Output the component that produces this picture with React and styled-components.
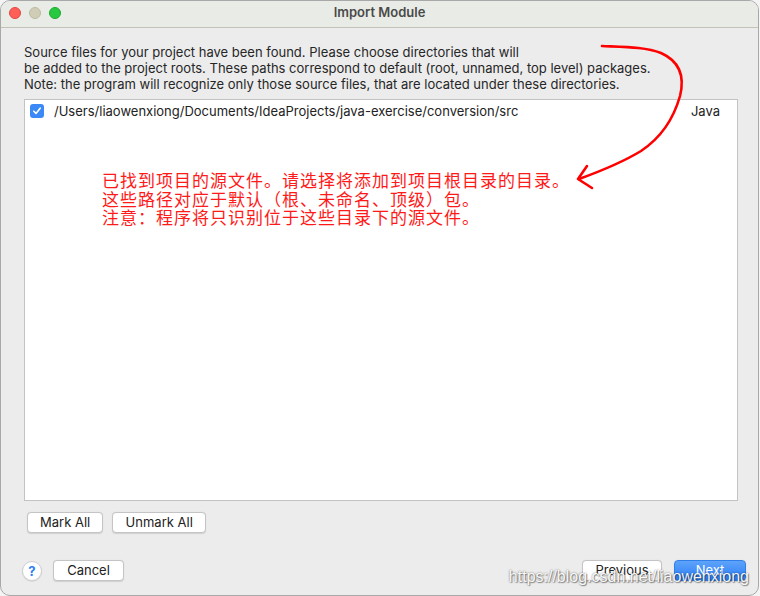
import React from "react";
import styled, { createGlobalStyle } from "styled-components";

const GlobalStyle = createGlobalStyle`
  html, body {
    margin: 0;
    padding: 0;
    background: #f4f4f4;
  }
  * {
    box-sizing: border-box;
  }
`;

const Window = styled.div`
  position: relative;
  width: 759px;
  height: 596px;
  display: flex;
  flex-direction: column;
  background: #ececec;
  border: 1px solid #a8a8a8;
  border-radius: 10px;
  overflow: hidden;
  font-family: Inter, "Liberation Sans", Arial, sans-serif;
  font-size: 13px;
  color: #222;
`;

const TitleBar = styled.div`
  position: relative;
  height: 27px;
  flex: none;
  display: flex;
  align-items: center;
  justify-content: center;
  padding-bottom: 4px;
  background: #e9ece6;
  border-bottom: 1px solid #c2c3b5;
`;

const Lights = styled.div`
  position: absolute;
  left: 8px;
  top: 6px;
  display: flex;
  gap: 8px;
`;

const Light = styled.span`
  width: 12px;
  height: 12px;
  border-radius: 50%;
  background: ${(p) => p.color};
  border: 1px solid ${(p) => p.edge};
`;

const Title = styled.div`
  font-weight: 600;
  font-size: 13px;
  color: #4a4a4a;
`;

const Body = styled.div`
  flex: 1;
  display: flex;
  flex-direction: column;
  padding: 16px 20px 0 23px;
`;

const Description = styled.div`
  line-height: 16px;
  color: #262626;
  margin-bottom: 7px;
`;

const ListBox = styled.div`
  height: 402px;
  background: #fff;
  border: 1px solid #c3c3c3;
  display: flex;
  flex-direction: column;
`;

const Row = styled.div`
  display: flex;
  align-items: center;
  height: 21px;
  padding: 1px 17px 0 5px;
`;

const Check = styled.span`
  width: 14px;
  height: 14px;
  border-radius: 3px;
  background: #3b88f7;
  display: flex;
  align-items: center;
  justify-content: center;
  margin-right: 10px;
`;

const Path = styled.span`
  flex: 1;
`;

const ButtonRow = styled.div`
  display: flex;
  gap: 9px;
  margin-top: 11px;
  padding-left: 3px;
`;

const Button = styled.button`
  height: 21px;
  padding: 0 ${(p) => p.pad || 12}px;
  min-width: ${(p) => p.width || 0}px;
  font-family: inherit;
  font-size: 13px;
  color: ${(p) => (p.primary ? "#fff" : "#222")};
  background: ${(p) =>
    p.primary ? "linear-gradient(#5ea3fa, #2b7ef6)" : "#fff"};
  border: 1px solid ${(p) => (p.primary ? "#2f7fe9" : "#c4c4c4")};
  border-radius: 4px;
  box-shadow: 0 0.5px 1px rgba(0, 0, 0, 0.12);
  line-height: 19px;
`;

const Footer = styled.div`
  display: flex;
  align-items: center;
  margin: 27px -8px 0 -2px;
`;

const Help = styled.span`
  width: 20px;
  height: 20px;
  border-radius: 50%;
  background: #fff;
  border: 1px solid #d2d2d2;
  box-shadow: 0 0.5px 1px rgba(0, 0, 0, 0.15);
  display: flex;
  align-items: center;
  justify-content: center;
  color: #2d7ff6;
  font-weight: bold;
  font-size: 13px;
  margin-right: 11px;
`;

const Spacer = styled.div`
  flex: 1;
`;

const FooterRight = styled.div`
  display: flex;
  gap: 12px;
`;

const Note = styled.div`
  position: absolute;
  left: 101px;
  top: 170px;
  font-family: "Noto Sans CJK SC", sans-serif;
  font-size: 17px;
  letter-spacing: 1px;
  line-height: 18.5px;
  color: #ff1a1a;
  pointer-events: none;
`;

const Arrow = styled.svg`
  position: absolute;
  left: 0;
  top: 0;
  pointer-events: none;
`;

const Watermark = styled.div`
  position: absolute;
  right: 9px;
  bottom: 9px;
  font-family: "Liberation Sans", Arial, sans-serif;
  font-size: 16px;
  color: rgba(255, 255, 255, 0.95);
  text-shadow: 0 0 2px rgba(0, 0, 0, 0.55), 1px 1px 1px rgba(0, 0, 0, 0.35);
  pointer-events: none;
`;

export default function App() {
  return (
    <>
      <GlobalStyle />
      <Window>
        <TitleBar>
          <Lights>
            <Light color="#fe5f57" edge="#e14640" />
            <Light color="#cfcdb5" edge="#bcbaa2" />
            <Light color="#28c840" edge="#1aab29" />
          </Lights>
          <Title>Import Module</Title>
        </TitleBar>
        <Body>
          <Description>
            Source files for your project have been found. Please choose directories that will
            <br />
            be added to the project roots. These paths correspond to default (root, unnamed, top level) packages.
            <br />
            Note: the program will recognize only those source files, that are located under these directories.
          </Description>
          <ListBox>
            <Row>
              <Check>
                <svg width="10" height="10" viewBox="0 0 10 10">
                  <path d="M1.8 5.2 L4 7.4 L8.2 2.2" fill="none" stroke="#fff" strokeWidth="1.6" strokeLinecap="round" strokeLinejoin="round" />
                </svg>
              </Check>
              <Path>/Users/liaowenxiong/Documents/IdeaProjects/java-exercise/conversion/src</Path>
              <span>Java</span>
            </Row>
          </ListBox>
          <ButtonRow>
            <Button width={76}>Mark All</Button>
            <Button width={94}>Unmark All</Button>
          </ButtonRow>
          <Footer>
            <Help>?</Help>
            <Button width={71}>Cancel</Button>
            <Spacer />
            <FooterRight>
              <Button width={80}>Previous</Button>
              <Button width={72} primary>Next</Button>
            </FooterRight>
          </Footer>
        </Body>
        <Note>
          已找到项目的源文件。请选择将添加到项目根目录的目录。
          <br />
          这些路径对应于默认（根、未命名、顶级）包。
          <br />
          注意：程序将只识别位于这些目录下的源文件。
        </Note>
        <Arrow width="760" height="596" viewBox="0 0 760 596">
          <path
            d="M601 45 C 625 46, 645 46, 660 52 C 678 60, 684 75, 679 95 C 672 120, 658 138, 640 150 C 622 161, 600 170, 578 178"
            fill="none"
            stroke="#ff0000"
            strokeWidth="2.6"
            strokeLinecap="round"
          />
          <path d="M586 165 L577 178 L591 187" fill="none" stroke="#ff0000" strokeWidth="2.6" strokeLinecap="round" strokeLinejoin="round" />
        </Arrow>
        <Watermark>https://blog.csdn.net/liaowenxiong</Watermark>
      </Window>
    </>
  );
}
